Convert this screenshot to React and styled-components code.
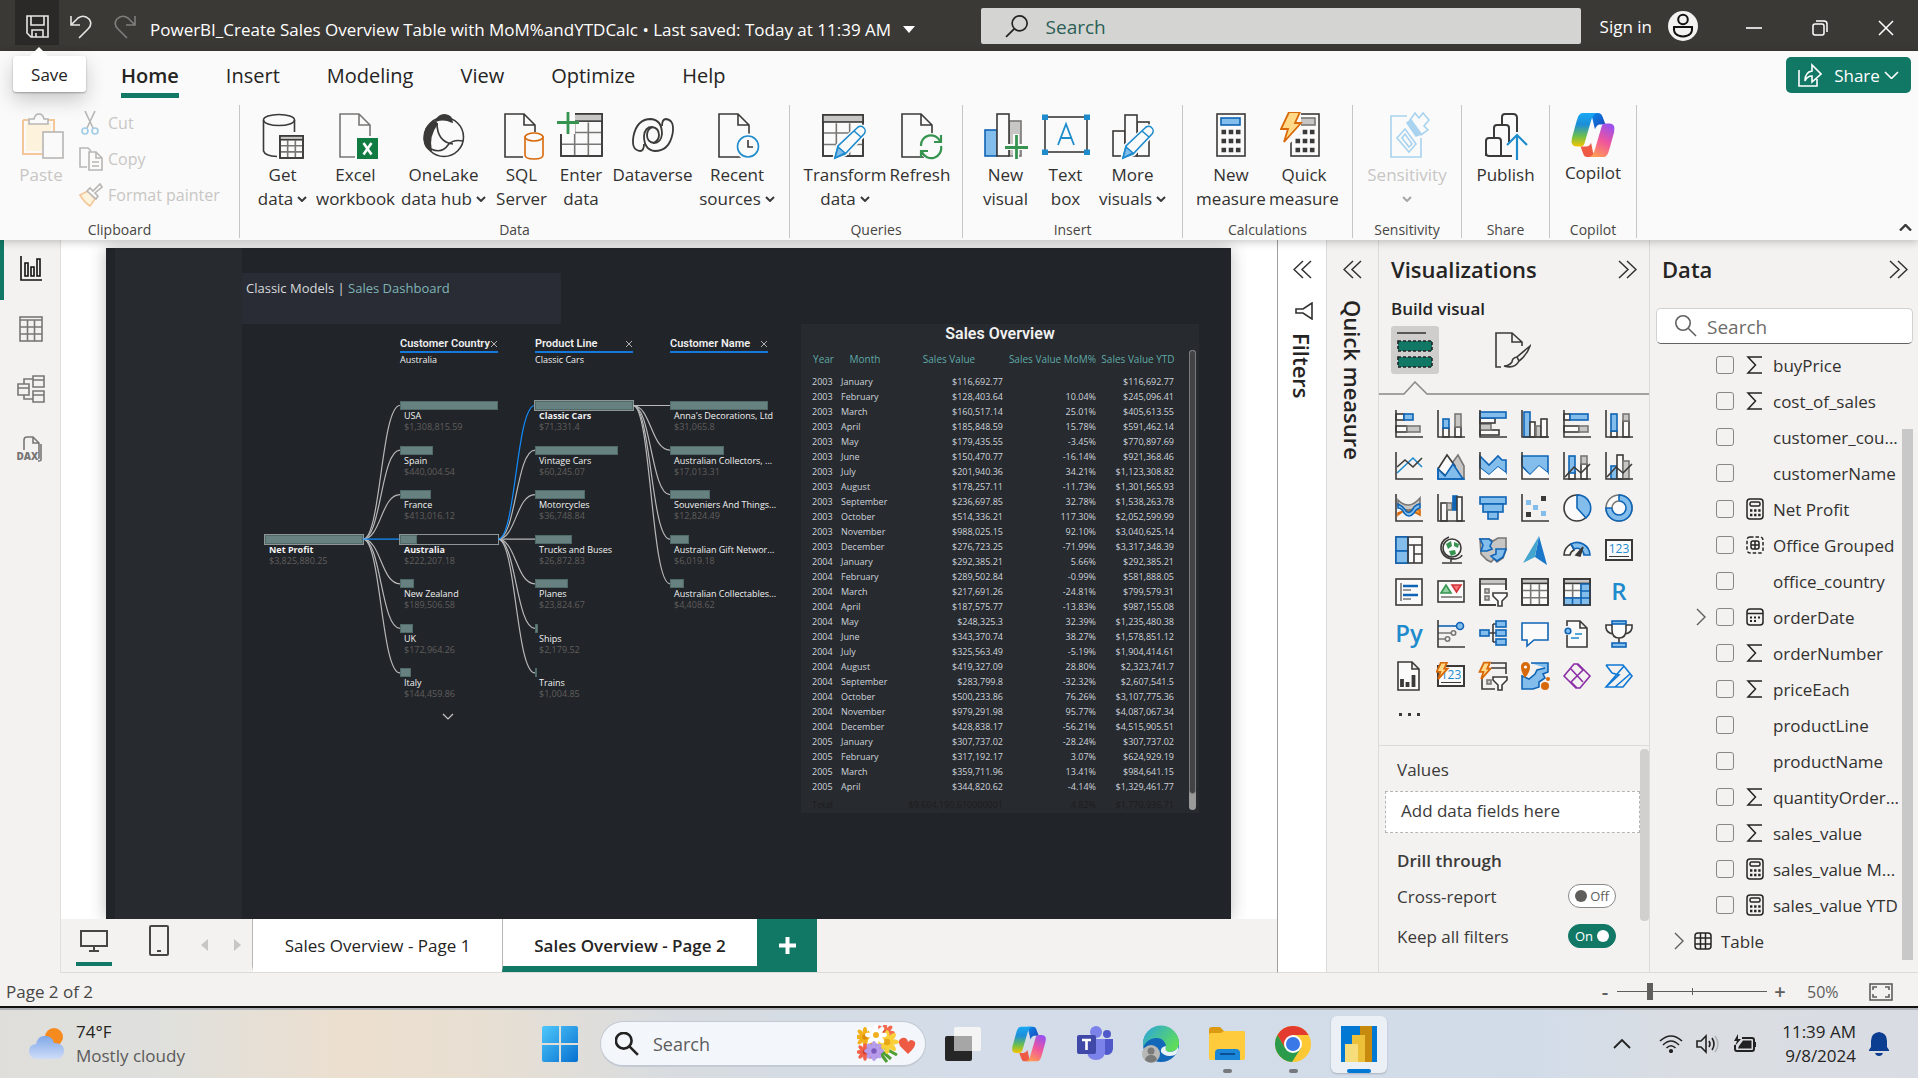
import React from "react";
import styled, { createGlobalStyle, css } from "styled-components";

const SANS = `"Open Sans", "Noto Sans", sans-serif`;
const DIN = `Roboto, "Open Sans", sans-serif`;
const GREEN = "#117865";
const K = "#3b3a39";
const G = "#797775";
const LG = "#c8c6c4";
const B = "#0f64b5";
const LB = "#83bdec";
const W = "#fafafa";
const SKY = "#1e8bcd";

const Global = createGlobalStyle`
  *, *::before, *::after { box-sizing: border-box; }
  body { margin: 0; font-family: ${SANS}; color: #252423; background: #f3f2f1; }
  button { font: inherit; color: inherit; background: none; border: 0; padding: 0; cursor: pointer; }
  input { font: inherit; margin: 0; }
  svg { display: block; flex: none; }
`;

const Shell = styled.div`
  display: flex;
  flex-direction: column;
  min-height: 100vh;
`;

/* ---------- title bar ---------- */
const TitleBar = styled.header`
  display: flex;
  height: 51px;
  background: #3b3936;
  color: #fff;
  padding-left: 15px;
`;
const QuickButton = styled.button`
  width: 44px;
  height: 45px;
  display: flex;
  justify-content: center;
  padding-top: 15px;
  background: ${(p) => (p.$active ? "#2a2927" : "transparent")};
  opacity: ${(p) => (p.$dim ? 0.4 : 1)};
`;
const FileName = styled.button`
  display: flex;
  align-items: center;
  gap: 12px;
  height: 58px;
  margin-left: 3px;
  font-size: 17px;
  white-space: nowrap;
`;
const Spacer = styled.div`
  flex: 1;
`;
const TopSearch = styled.label`
  display: flex;
  align-items: center;
  gap: 18px;
  width: 600px;
  height: 36px;
  margin-top: 8px;
  padding-left: 24px;
  border-radius: 2px;
  background: #d4d4d2;
`;
const TopSearchInput = styled.input`
  flex: 1;
  padding: 2px 0 0;
  border: 0;
  background: none;
  outline: 0;
  font-size: 19px;
  &::placeholder { color: #2b5f57; opacity: 1; }
`;
const SignIn = styled.button`
  display: flex;
  align-items: center;
  gap: 16px;
  height: 52px;
  margin-left: 19px;
  font-size: 17px;
`;
const WindowButtons = styled.div`
  display: flex;
  margin-left: 22px;
`;
const WindowButton = styled.button`
  width: 66px;
  height: 55px;
  display: flex;
  align-items: center;
  justify-content: center;
  padding-left: 2px;
`;

/* ---------- ribbon ---------- */
const Ribbon = styled.section`
  position: relative;
  z-index: 2;
  background: #fafafa;
  box-shadow: 0 2px 8px rgba(0, 0, 0, 0.22);
`;
const RibbonTabs = styled.nav`
  display: flex;
  align-items: center;
  gap: 47px;
  height: 54px;
  padding: 0 7px 0 121px;
`;
const RibbonTab = styled.button`
  height: 47px;
  margin-bottom: 7px;
  padding-top: 6px;
  font-size: 20px;
  font-weight: ${(p) => (p.$active ? 600 : 400)};
  border-bottom: 5px solid ${(p) => (p.$active ? GREEN : "transparent")};
`;
const ShareButton = styled.button`
  display: flex;
  align-items: center;
  justify-content: center;
  gap: 12px;
  width: 125px;
  height: 36px;
  margin-bottom: 6px;
  border-radius: 5px;
  background: ${GREEN};
  color: #fff;
  font-size: 17px;
`;
const Groups = styled.div`
  display: flex;
  height: 135px;
  padding-bottom: 2px;
`;
const Group = styled.div`
  display: flex;
  flex-direction: column;
  align-items: center;
  justify-content: space-between;
  width: ${(p) => p.$width}px;
  border-right: 1px solid #c8c6c4;
`;
const GroupLabel = styled.div`
  font-size: 14px;
  line-height: 16px;
  color: #484644;
`;
const Commands = styled.div`
  display: flex;
  padding-top: 7px;
`;
const Command = styled.button`
  display: flex;
  flex-direction: column;
  align-items: center;
  width: ${(p) => p.$width}px;
  font-size: 17px;
  line-height: 24px;
  color: ${(p) => (p.$off ? "#c8c6c4" : "#323130")};
  white-space: nowrap;
  & > svg { margin-bottom: 3px; }
`;
const LabelLine = styled.span`
  display: flex;
  align-items: center;
  gap: 4px;
  min-height: 24px;
`;
const ClipColumn = styled.div`
  display: flex;
  flex-direction: column;
`;
const ClipButton = styled.button`
  display: flex;
  align-items: center;
  gap: 5px;
  height: 36px;
  color: #c8c6c4;
  font-size: 16px;
  white-space: nowrap;
`;
const Clipboard = styled.div`
  display: flex;
  align-self: stretch;
  padding-left: 6px;
  gap: 3px;
`;
const Collapse = styled.button`
  margin: auto 6px 7px auto;
`;
const SaveTip = styled.div`
  position: absolute;
  left: 13px;
  top: 5px;
  width: 73px;
  height: 36px;
  line-height: 38px;
  text-align: center;
  font-size: 17px;
  background: #fff;
  border-radius: 3px;
  box-shadow: 0 1px 2px rgba(0, 0, 0, 0.3), 0 8px 20px rgba(0, 0, 0, 0.2);
  &::before {
    content: "";
    position: absolute;
    left: 17px;
    top: -9px;
    border: 9px solid transparent;
    border-top: 0;
    border-bottom-color: #fff;
  }
`;

/* ---------- workspace ---------- */
const Workspace = styled.div`
  display: flex;
  flex: 1;
`;
const ViewRail = styled.nav`
  display: flex;
  flex-direction: column;
  width: 61px;
  border-right: 1px solid #e1dfdd;
`;
const ViewButton = styled.button`
  height: 60px;
  display: flex;
  align-items: center;
  justify-content: center;
  border-left: 4px solid ${(p) => (p.$active ? GREEN : "transparent")};
  padding: 0 3px 2px 0;
`;
const Main = styled.main`
  flex: 1;
  min-width: 0;
  display: flex;
  flex-direction: column;
`;
const Canvas = styled.div`
  flex: 1;
  display: flex;
  background: #fff;
  padding: 8px 46px 0 45px;
`;
const Report = styled.div`
  flex: 1;
  display: flex;
  background: #212429;
  box-shadow: 0 0 16px rgba(0, 0, 0, 0.25);
  clip-path: inset(-16px -16px 0 -16px);
  padding-left: 9px;
`;
const ReportRail = styled.div`
  width: 127px;
  background: #272a2e;
`;
const ReportBody = styled.div`
  flex: 1;
`;
const Heading = styled.h1`
  width: 319px;
  height: 51px;
  margin: 25px 0 0;
  padding: 4px 4px;
  background: #292c34;
  color: #d8dadd;
  font-size: 13px;
  line-height: 22px;
  font-weight: 400;
`;
const Accent = styled.span`
  color: #7fb4b6;
`;
const Visuals = styled.div`
  display: flex;
  justify-content: space-between;
  align-items: flex-start;
  padding: 0 32px 0 23px;
`;
const Tree = styled.section`
  padding-top: 13px;
`;
const TreeHeads = styled.div`
  display: flex;
  gap: 37px;
  padding-left: 135px;
  height: 64px;
`;
const TreeHead = styled.div`
  width: 98px;
`;
const TreeTitle = styled.div`
  display: flex;
  align-items: center;
  justify-content: space-between;
  height: 16px;
  border-bottom: 2px solid #1478dc;
  font: 600 11px/14px ${DIN};
  color: #eee;
  white-space: nowrap;
`;
const TreeSub = styled.div`
  font-size: 9px;
  line-height: 14px;
  color: #f0f0f0;
`;
const TreeBody = styled.div`
  display: flex;
  height: 312px;
`;
const TreeColumn = styled.div`
  display: grid;
  grid-template-columns: 98px;
  grid-template-rows: repeat(7, 1fr);
  width: 98px;
`;
const Node = styled.div`
  grid-row-start: ${(p) => p.$row};
  min-height: 0;
`;
const NodeTrack = styled.div`
  height: 9px;
  outline: ${(p) => (p.$picked ? "1px solid #8f9494" : "none")};
`;
const NodeBar = styled.div`
  height: 9px;
  background: #678080;
  border: 1px solid #506a6a;
`;
const NodeName = styled.div`
  padding-left: 4px;
  font-size: 9px;
  line-height: 12px;
  font-weight: ${(p) => (p.$picked ? 700 : 400)};
  color: #f2f2f2;
  white-space: nowrap;
`;
const NodeValue = styled.div`
  padding-left: 4px;
  font-size: 9px;
  line-height: 9px;
  color: #605e5c;
`;
const MoreNodes = styled.button`
  display: block;
  margin-left: 177px;
`;
const Card = styled.section`
  display: flex;
  width: 398px;
  height: 489px;
  padding: 0 3px 3px 8px;
  background: #272a2e;
`;
const CardMain = styled.div`
  width: 380px;
`;
const CardTitle = styled.h2`
  margin: 0;
  padding-left: 2px;
  font: 600 16px/20px ${DIN};
  color: #f0f0f0;
  text-align: center;
`;
const SalesTable = styled.table`
  table-layout: fixed;
  width: 368px;
  border-collapse: collapse;
  font-size: 9px;
  line-height: 15px;
  color: #cdd3dc;
  th, td { padding: 0 3px; white-space: nowrap; text-align: right; }
  th { height: 30px; padding: 0; text-align: center; font-size: 10px; font-weight: 400; color: #5fa9a8; }
  td:nth-child(1), td:nth-child(2) { text-align: left; }
  tfoot td { color: #1b1d20; height: 20px; }
`;
const Col = styled.col`
  width: ${(p) => p.$width}px;
`;
const CardScroll = styled.div`
  width: 7px;
  height: 460px;
  margin-top: 26px;
  border-radius: 4px;
  background: #9a9a9a;
  &::before {
    content: "";
    display: block;
    height: 444px;
    border: 1px solid #7a7a7a;
    border-radius: 4px;
    background: #424345;
  }
`;

/* ---------- page tabs ---------- */
const PageBar = styled.nav`
  display: flex;
  height: 54px;
  border-bottom: 1px solid #dddbd9;
`;
const LayoutButton = styled.button`
  display: flex;
  justify-content: center;
  width: ${(p) => p.$width}px;
  padding-top: 6px;
`;
const Underlined = styled.span`
  display: flex;
  flex-direction: column;
  align-items: center;
  justify-content: space-between;
  width: 36px;
  height: 41px;
  padding-top: 5px;
  border-bottom: 4px solid ${GREEN};
`;
const Arrows = styled.div`
  display: flex;
  align-items: center;
  gap: 26px;
  height: 51px;
  width: 60px;
  padding-left: 9px;
`;
const PageTab = styled.button`
  width: ${(p) => (p.$active ? 255 : 250)}px;
  padding-top: 6px;
  background: #fff;
  border-left: 1px solid #b9b7b5;
  border-bottom: 6px solid ${(p) => (p.$active ? GREEN : "#fff")};
  font-size: 17px;
  font-weight: ${(p) => (p.$active ? 600 : 400)};
  white-space: nowrap;
`;
const AddPage = styled.button`
  width: 60px;
  background: ${GREEN};
  display: flex;
  align-items: center;
  justify-content: center;
`;

/* ---------- side panes ---------- */
const SlimPane = styled.aside`
  display: flex;
  flex-direction: column;
  align-items: center;
  width: ${(p) => p.$width}px;
  padding-top: 20px;
  border-left: 1px solid ${(p) => (p.$white ? "#a19f9d" : "#dddbd9")};
  border-bottom: 1px solid #dddbd9;
  background: ${(p) => (p.$white ? "#fff" : "#f3f2f1")};
`;
const SlimTitle = styled.h2`
  margin: 0;
  writing-mode: vertical-rl;
  font-size: 22px;
  line-height: 28px;
  font-weight: 600;
`;
const SlimIcon = styled.div`
  padding: 23px 0 13px 4px;
`;
const SlimGap = styled.div`
  height: 21px;
`;
const Pane = styled.aside`
  display: flex;
  flex-direction: column;
  width: ${(p) => p.$width}px;
  border-left: 1px solid #dddbd9;
  border-bottom: 1px solid #dddbd9;
`;
const PaneHead = styled.div`
  display: flex;
  align-items: center;
  justify-content: space-between;
  height: 58px;
  padding: 0 ${(p) => p.$right}px 0 12px;
`;
const PaneTitle = styled.h2`
  margin: 0;
  font-size: 22px;
  font-weight: 600;
`;
const PaneSub = styled.h3`
  margin: 0;
  padding-left: 12px;
  font-size: 17px;
  line-height: 22px;
  font-weight: 600;
`;
const ModeRow = styled.div`
  display: flex;
  gap: 50px;
  padding: 6px 12px 7px;
`;
const ModeButton = styled.button`
  display: flex;
  align-items: center;
  justify-content: center;
  width: 48px;
  height: 48px;
  border-radius: 3px;
  background: ${(p) => (p.$active ? "#d0cecc" : "transparent")};
`;
const VisualGrid = styled.div`
  display: grid;
  grid-template-columns: repeat(6, 28px);
  gap: 14px;
  padding: 15px 16px 12px;
`;
const MoreDots = styled.button`
  align-self: flex-start;
  padding: 9px 19px 28px;
`;
const Wells = styled.div`
  flex: 1;
  display: flex;
  justify-content: space-between;
  border-top: 1px solid #dddbd9;
  padding-top: 3px;
`;
const WellList = styled.div`
  width: 255px;
  margin-left: 6px;
  font-size: 17px;
  color: #3b3a39;
`;
const WellLabel = styled.div`
  padding-left: 12px;
  line-height: 42px;
`;
const DropZone = styled.div`
  height: 42px;
  padding-left: 15px;
  line-height: 38px;
  border: 1px dashed #b8b6b4;
  background: #fff;
`;
const WellHeading = styled.h3`
  margin: 0;
  padding: 13px 0 0 12px;
  font-size: 17px;
  line-height: 30px;
  font-weight: 600;
`;
const SwitchRow = styled.label`
  display: flex;
  align-items: center;
  justify-content: space-between;
  height: 40px;
  padding: 0 24px 0 12px;
`;
const Switch = styled.span`
  position: relative;
  display: flex;
  align-items: center;
  justify-content: ${(p) => (p.$on ? "flex-start" : "flex-end")};
  width: 48px;
  height: 24px;
  padding: 0 6px;
  border: 1px solid ${(p) => (p.$on ? GREEN : "#8a8886")};
  border-radius: 12px;
  background: ${(p) => (p.$on ? GREEN : "#fff")};
  color: ${(p) => (p.$on ? "#fff" : "#605e5c")};
  font-size: 13px;
`;
const SwitchInput = styled.input`
  appearance: none;
  position: absolute;
  top: 5px;
  left: 6px;
  width: 12px;
  height: 12px;
  border-radius: 50%;
  background: #605e5c;
  &:checked { left: 28px; background: #fff; }
`;
const WellScroll = styled.div`
  width: 9px;
  height: 172px;
  border-radius: 4px;
  background: #d2d0ce;
`;
const DataSearch = styled.label`
  display: flex;
  align-items: center;
  gap: 10px;
  height: 36px;
  margin: 10px 5px 3px 6px;
  padding-left: 18px;
  border: 1px solid #d1d1d1;
  border-bottom-color: #616161;
  border-radius: 5px;
  background: #fff;
`;
const DataSearchInput = styled.input`
  width: 160px;
  padding: 2px 0 0;
  border: 0;
  outline: 0;
  background: none;
  font-size: 19px;
  &::placeholder { color: #6e6c6a; opacity: 1; }
`;
const FieldArea = styled.div`
  flex: 1;
  display: flex;
`;
const FieldList = styled.ul`
  flex: 1;
  margin: 0;
  padding: 0;
  list-style: none;
`;
const FieldRow = styled.li`
  display: flex;
  align-items: center;
  height: 36px;
  padding-left: ${(p) => (p.$table ? 24 : 46)}px;
  font-size: 17px;
  color: #323130;
`;
const FieldLabel = styled.label`
  display: flex;
  align-items: center;
  white-space: nowrap;
`;
const Check = styled.input`
  appearance: none;
  width: 18px;
  height: 18px;
  border: 1px solid #8a8886;
  border-radius: 3px;
`;
const Slot = styled.span`
  display: flex;
  align-items: center;
  width: ${(p) => p.$width}px;
`;
const FieldIcon = styled.span`
  width: 18px;
  margin: 0 9px 0 12px;
`;
const FieldScroll = styled.div`
  width: 11px;
  height: 531px;
  margin: 82px 5px 0 0;
  background: #c8c8c8;
`;

/* ---------- status bar ---------- */
const StatusBar = styled.footer`
  display: flex;
  align-items: center;
  height: 33px;
  padding: 4px 25px 0 6px;
  font-size: 17px;
  color: #484644;
`;
const ZoomStep = styled.button`
  width: 20px;
  margin: 0 1px;
  font-size: 20px;
  font-weight: 600;
  color: #605e5c;
`;
const ZoomRange = styled.input`
  appearance: none;
  width: 150px;
  height: 17px;
  margin: 0 2px 0 1px;
  background:
    linear-gradient(#605e5c, #605e5c) center / 1px 7px no-repeat,
    linear-gradient(#605e5c, #605e5c) center / 100% 1px no-repeat;
  &::-webkit-slider-thumb {
    appearance: none;
    width: 6px;
    height: 17px;
    background: #605e5c;
  }
`;
const ZoomValue = styled.span`
  width: 62px;
  margin-left: 16px;
  font-size: 16px;
  color: #605e5c;
`;

/* ---------- taskbar ---------- */
const Taskbar = styled.footer`
  display: grid;
  grid-template-columns: 1fr auto 1fr;
  height: 72px;
  padding-top: 2px;
  border-top: 2px solid #111;
  box-shadow: inset 0 2px 0 #adb1b5;
  background: linear-gradient(90deg, #dfdedb 0%, #dfe0dd 8%, #ecdfcf 18%, #e8dfd2 25%, #d8dce0 35%, #d3dce8 50%, #d2dce9 80%, #dadde2 88%, #d9dce2 100%);
`;
const Weather = styled.button`
  display: flex;
  align-items: center;
  gap: 11px;
  padding-left: 28px;
  text-align: left;
  font-size: 17px;
  line-height: 24px;
`;
const Muted = styled.span`
  display: block;
  color: #5a5a5a;
`;
const Apps = styled.div`
  display: flex;
  align-items: center;
  padding-left: 1px;
`;
const AppButton = styled.button`
  position: relative;
  display: flex;
  align-items: center;
  justify-content: center;
  width: 56px;
  height: 57px;
  margin: 0 5px;
  border-radius: 6px;
  ${(p) => p.$active && css`background: #ebf0f6; box-shadow: 0 1px 2px rgba(0, 0, 0, 0.2);`}
  &::after {
    content: "";
    display: ${(p) => (p.$active || p.$running ? "block" : "none")};
    position: absolute;
    bottom: 0;
    width: ${(p) => (p.$active ? 24 : 9)}px;
    height: 4px;
    border-radius: 2px;
    background: ${(p) => (p.$active ? "#0078d4" : "#75797e")};
  }
`;
const TaskSearch = styled.label`
  display: flex;
  align-items: center;
  gap: 14px;
  width: 326px;
  height: 46px;
  margin: 0 4px 0 7px;
  padding: 0 8px 0 14px;
  border: 1px solid #c3cad3;
  border-bottom-width: 2px;
  border-radius: 23px;
  background: #f3f6fa;
`;
const TaskSearchInput = styled.input`
  flex: 1;
  min-width: 0;
  padding: 1px 0 0;
  border: 0;
  outline: 0;
  background: none;
  font-size: 18px;
  &::placeholder { color: #5c5c5c; opacity: 1; }
`;
const Tray = styled.div`
  display: flex;
  align-items: center;
  justify-content: flex-end;
  gap: 13px;
  padding-right: 29px;
`;
const Clock = styled.div`
  width: 86px;
  text-align: right;
  font-size: 17px;
  line-height: 24px;
  white-space: nowrap;
`;

/* ---------- drawings ---------- */
const Svg = ({ w, h, vb, children, ...rest }) => (
  <svg width={w} height={h ?? w} viewBox={vb ?? `0 0 ${w} ${h ?? w}`} fill="none" stroke={K} strokeWidth="1.6" aria-hidden="true" {...rest}>
    {children}
  </svg>
);
const Chevron = ({ w = 10, color = K, up, right, sw = 2 }) => (
  <Svg w={right ? w / 2 + 1 : w} h={right ? w : w / 2 + 1} stroke={color} strokeWidth={sw}>
    <path d={right ? `M1 1L${w / 2} ${w / 2}L1 ${w - 1}` : up ? `M1 ${w / 2}L${w / 2} 1L${w - 1} ${w / 2}` : `M1 1L${w / 2} ${w / 2}L${w - 1} 1`} />
  </Svg>
);
const Double = ({ left }) => (
  <Svg w={19} stroke="#323130" strokeWidth="1.5">
    <path d={left ? "M10 1L1 9.5L10 18M18 1L9 9.5L18 18" : "M1 1L10 9.5L1 18M9 1L18 9.5L9 18"} />
  </Svg>
);
const Lens = ({ size, color, sw = 1.6, flip }) => (
  <Svg w={size} vb="0 0 22 22" stroke={color} strokeWidth={sw}>
    {flip ? <path d="M8.800 13.200L1 21" /> : <path d="M13.200 13.200L21 21" />}
    <circle cx={flip ? 14 : 8} cy="8" r="7.200" />
  </Svg>
);

const Doc = ({ stroke = K, x = 4 }) => (
  <path d={`M${x + 22} 45H${x}V2H${x + 19}L${x + 30} 13V26M${x + 19} 2V13H${x + 30}`} stroke={stroke} />
);
const Pencil = () => (
  <>
    <path d="M14 46L17 34L37 16a4 4 0 0 1 6 6L24 42Z" fill={W} stroke={W} strokeWidth="5" />
    <path d="M14 46L17 34L36 16a4 4 0 0 1 7 6L24 42Z" fill={W} stroke={SKY} />
    <path d="M14 46L17 35L24 41Z" fill={LB} stroke={SKY} />
    <path d="M33 19L40 25" stroke={SKY} />
  </>
);
const Grid = ({ x, y, w, h, s = K, head = LG }) => (
  <>
    <rect x={x} y={y} width={w} height={h} fill={W} stroke={s} />
    <path d={`M${x} ${y + h * 0.44}h${w}M${x} ${y + h * 0.72}h${w}M${x + w / 3} ${y + h * 0.2}V${y + h}M${x + (w * 2) / 3} ${y + h * 0.2}V${y + h}`} stroke={G} />
    <rect x={x} y={y} width={w} height={h} stroke={s} />
    <rect x={x} y={y} width={w} height={h * 0.17} fill={head} stroke={s} />
  </>
);
const Calc = ({ x = 12 }) => (
  <>
    <rect x={x} y="2" width="28" height="42" fill={W} />
    <path d={`M${x + 4.500} 20h19M${x + 4.500} 29h19M${x + 4.500} 38h19`} stroke={K} strokeWidth="4.500" strokeDasharray="4.600 2.600" />
  </>
);
const Bolt = ({ s = 1, x = 0, y = 0 }) => (
  <path transform={`translate(${x} ${y}) scale(${s})`} d="M9 1H20L15 12H21L4 31L8 18H1Z" fill="#ffd987" stroke="#d8690a" strokeWidth={1.8 / s} />
);
const CopilotMark = ({ size }) => (
  <svg width={size} height={size} viewBox="0 0 48 48" aria-hidden="true">
    <defs>
      <linearGradient id="cpA" x1="0" y1="0" x2="0" y2="1">
        <stop offset="0" stopColor="#18a8f5" /><stop offset=".35" stopColor="#1d8ed8" /><stop offset=".7" stopColor="#6fc04a" /><stop offset="1" stopColor="#f5c400" />
      </linearGradient>
      <linearGradient id="cpB" x1=".7" y1="0" x2=".3" y2="1">
        <stop offset="0" stopColor="#9a50ee" /><stop offset=".5" stopColor="#f0559c" /><stop offset="1" stopColor="#ff9a55" />
      </linearGradient>
      <linearGradient id="cpC" x1="0" y1="0" x2="1" y2="1">
        <stop offset="0" stopColor="#0a8be8" /><stop offset="1" stopColor="#1d3fb8" />
      </linearGradient>
    </defs>
    <path d="M22 1H29Q33 1 34 5L37 13H31Q28 13 26 18Z" fill="url(#cpC)" />
    <path d="M17 47H25L22 32Q20 36 17 36H11L14 44Q15 47 17 47Z" fill="#ef5a45" />
    <path d="M13 1H28Q24 2 22 9L15 33Q14 36 10 36H7Q0 36 2 27L7 9Q9 1 13 1Z" fill="url(#cpA)" />
    <path d="M35 47H20Q24 46 26 39L33 15Q34 12 38 12H41Q48 12 46 21L41 39Q39 47 35 47Z" fill="url(#cpB)" />
  </svg>
);

const ribbonIcon = {
  get: (
    <Svg w={48}>
      <ellipse cx="20" cy="8" rx="15.500" ry="5.500" />
      <path d="M4.500 8V39Q6 44 18 44.500M35.500 8V20" />
      <Grid x={21} y={24} w={23} h={22} />
    </Svg>
  ),
  excel: (
    <Svg w={48}>
      <Doc stroke={G} x={8} />
      <path d="M23 24H48V48H23Z" fill={W} stroke="none" />
      <rect x="25" y="26" width="21" height="21" fill="#107c41" stroke="none" />
      <path d="M31.500 31L39.500 42.500M39.500 31L31.500 42.500" stroke="#fff" strokeWidth="2.600" />
    </Svg>
  ),
  lake: (
    <Svg w={48}>
      <path d="M16 9Q19 2 26 3Q32 4 32 10Q24 6 16 9Z" fill={K} />
      <path d="M15 9Q4 14 4 27Q5 37 11 38Q8 24 17 12Z" fill={K} />
      <circle cx="24" cy="25" r="19.500" />
      <path d="M17 11Q17 30 33 32M11 37Q22 42 28 33Q33 27 43 29" />
    </Svg>
  ),
  sql: (
    <Svg w={48}>
      <Doc x={7} />
      <path d="M25 20H48V48H25Z" fill={W} stroke="none" />
      <path d="M27 25V43Q27 47 36 47T45 43V25Z" fill={W} stroke="#d8690a" />
      <ellipse cx="36" cy="25" rx="9" ry="4" fill={W} stroke="#d8690a" />
    </Svg>
  ),
  enter: (
    <Svg w={48}>
      <Grid x={4} y={2} w={41} h={42} />
      <path d="M0 0H18V22H0Z" fill={W} stroke="none" />
      <path d="M11 0V22M0 10.500H22" stroke="#379450" strokeWidth="2.800" />
    </Svg>
  ),
  dataverse: (
    <Svg w={48} strokeWidth="1.8">
      <path d="M11 39Q2 38 4.500 24Q8 7 22 7Q33 8 33 22Q32 31 25 31Q18 30 18 23Q18 17 24 15M11 39Q15 39 15 32" />
      <path d="M37 7Q46 8 43.500 22Q40 39 26 39Q15 38 15 24Q16 15 23 15Q30 16 30 23Q30 29 24 31M37 7Q33 7 33 14" />
    </Svg>
  ),
  recent: (
    <Svg w={48}>
      <Doc x={6} />
      <circle cx="35" cy="34.500" r="13" fill={W} stroke="none" />
      <circle cx="35" cy="34.500" r="10.500" fill={W} stroke={SKY} />
      <path d="M35 28V35H40" />
    </Svg>
  ),
  transform: (
    <Svg w={48}>
      <Grid x={2} y={3} w={40} h={41} />
      <Pencil />
    </Svg>
  ),
  refresh: (
    <Svg w={48}>
      <Doc x={6} />
      <circle cx="35" cy="34" r="13" fill={W} stroke="none" />
      <path d="M25 34A10 10 0 0 1 44 29M45 34A10 10 0 0 1 26 40M45 23V30H38M25 46V39H32" stroke="#379450" strokeWidth="2.200" />
    </Svg>
  ),
  visual: (
    <Svg w={48}>
      <rect x="3" y="18" width="12" height="26" fill={LB} stroke={B} />
      <rect x="27" y="9" width="12" height="35" fill={LG} stroke={G} />
      <rect x="15" y="2" width="12" height="42" fill={W} />
      <path d="M34 22V48M22 35H48" stroke={W} strokeWidth="6" />
      <path d="M34.500 23V47M23 35.500H46" stroke="#379450" strokeWidth="2.800" />
    </Svg>
  ),
  text: (
    <Svg w={48}>
      <rect x="3" y="5" width="42" height="35" />
      <path d="M0 2.500H6V8H0ZM42 2.500H48V8H42ZM0 37.500H6V43H0ZM42 37.500H48V43H42Z" fill={SKY} stroke="none" />
      <path d="M16 33L24 12L32 33M19 26H29" stroke={SKY} strokeWidth="1.800" />
    </Svg>
  ),
  more: (
    <Svg w={48}>
      <rect x="4" y="19" width="12" height="25" />
      <rect x="28" y="10" width="12" height="34" />
      <rect x="16" y="3" width="12" height="41" fill={W} />
      <Pencil />
    </Svg>
  ),
  measure: (
    <Svg w={48}>
      <Calc x={10} />
      <rect x="14" y="6" width="19" height="7" fill={LB} stroke={B} />
    </Svg>
  ),
  quick: (
    <Svg w={48}>
      <Calc x={11} />
      <rect x="17" y="6" width="18" height="7" fill={LG} stroke={G} />
      <path d="M1 0H21V21L7 34H1Z" fill={W} stroke="none" />
      <Bolt x={0} y={-1} />
    </Svg>
  ),
  sensitivity: (
    <Svg w={48} stroke="#a9d3ee">
      <path d="M24 4H8V45H38V26" />
      <path d="M14 26L22 17L33 32L26 40ZM19 26L22 22L29 32L26 35Z" />
      <path d="M24 11L28 8L38 22L33 24Z" fill="#a9d3ee" />
      <path d="M27 8L32 1L36 6L40 1L46 8L41 14L45 18L38 23Z" />
    </Svg>
  ),
  publish: (
    <Svg w={48}>
      <path d="M4 44V29Q4 26 7 26H16Q19 26 19 29V44H7Q4 44 4 41M12 26V16Q12 13 15 13H24Q27 13 27 16V30M19 44H30M20 13V5Q20 2 23 2H31Q35 2 35 6V20" strokeWidth="2" />
      <path d="M35 48V24M25 33L35 23L45 33" stroke={SKY} strokeWidth="2.200" />
    </Svg>
  ),
  copilot: <CopilotMark size={46} />,
};

const Axis = ({ children }) => (
  <>
    {children}
    <path d="M1 0V27H28" stroke={K} />
  </>
);
const R = ({ x, y, w, h, t = "w" }) => {
  const tone = { w: [W, K], b: [LB, B], g: [LG, G] }[t];
  return <rect x={x} y={y} width={w} height={h} fill={tone[0]} stroke={tone[1]} />;
};
const Funnel = () => <path d="M14 15H28V18L23 23V28H19V23L14 18Z" fill={W} />;

const visuals = [
  ["Stacked bar chart", <Axis><R x={1} y={4} w={8} h={6} /><R x={9} y={4} w={9} h={6} t="b" /><R x={1} y={16} w={11} h={6} /><R x={12} y={16} w={13} h={6} t="g" /></Axis>],
  ["Stacked column chart", <Axis><R x={6} y={18} w={6} h={9} /><R x={6} y={9} w={6} h={9} t="b" /><R x={18} y={17} w={6} h={10} /><R x={18} y={4} w={6} h={13} t="g" /></Axis>],
  ["Clustered bar chart", <Axis><R x={1} y={20} w={19} h={5} /><R x={1} y={14} w={11} h={6} t="g" /><R x={1} y={8} w={15} h={5} /><R x={1} y={2} w={26} h={6} t="b" /></Axis>],
  ["Clustered column chart", <Axis><R x={3} y={2} w={6} h={25} t="b" /><R x={9} y={12} w={5} h={15} /><R x={15} y={16} w={5} h={11} t="g" /><R x={20} y={9} w={6} h={18} /></Axis>],
  ["100% stacked bar chart", <Axis><R x={1} y={4} w={6} h={6} /><R x={7} y={4} w={18} h={6} t="b" /><R x={1} y={16} w={15} h={6} /><R x={16} y={16} w={9} h={6} t="g" /></Axis>],
  ["100% stacked column chart", <Axis><R x={6} y={21} w={6} h={6} /><R x={6} y={4} w={6} h={17} t="b" /><R x={18} y={11} w={6} h={16} /><R x={18} y={4} w={6} h={7} t="g" /></Axis>],
  ["Line chart", <Axis><path d="M2 21L18 6L27 15" stroke={SKY} /><path d="M2 15L10 8L18 15L27 6" /></Axis>],
  ["Area chart", <><path d="M13 14L21 3L27 14V26H18Z" fill={LG} stroke={G} /><path d="M1 17L10 3L18 14L9 24Z" fill={W} /><path d="M1 17L8 24L16 12L26 27H1Z" fill={LB} stroke={B} /><path d="M1 16V27H28" stroke={B} /></>],
  ["Stacked area chart", <Axis><path d="M1 4L10 13L19 4L23 8H27V21L19 15L10 23L1 16Z" fill={LB} stroke={B} /><path d="M1 16L10 23L19 15L27 21V27H1Z" fill={W} stroke="none" /></Axis>],
  ["100% stacked area chart", <Axis><path d="M1 4H27V21L18 14L9 23L1 14Z" fill={LB} stroke={B} /><path d="M1 16L9 23L18 14L27 21V27H1Z" fill={W} stroke="none" /></Axis>],
  ["Line and stacked column chart", <Axis><R x={6} y={20} w={6} h={7} /><R x={6} y={4} w={6} h={17} t="b" /><R x={18} y={12} w={6} h={15} /><R x={18} y={4} w={6} h={8} t="g" /><path d="M2 25L11 15L18 21L27 12" /></Axis>],
  ["Line and clustered column chart", <Axis><R x={6} y={14} w={6} h={13} t="b" /><R x={12} y={3} w={6} h={24} /><R x={18} y={9} w={6} h={18} t="g" /><path d="M2 25L11 15L18 21L27 12" /></Axis>],
  ["Ribbon chart", <Axis><path d="M3 19Q14 14 25 21V16Q14 11 3 21Z" fill="#f59b3c" stroke="#d8690a" /><path d="M3 6Q14 17 25 4V9Q14 22 3 11Z" fill={LG} stroke={G} /><path d="M3 10Q8 12 11 17Q15 21 19 13Q22 10 25 10V14Q22 14 19 19Q14 25 9 19Q7 14 3 14Z" fill={LB} stroke={B} /></Axis>],
  ["Waterfall chart", <Axis><R x={4} y={9} w={6} h={18} /><R x={10} y={9} w={5} h={7} t="g" /><rect x="16" y="2" width="4" height="14" fill={B} stroke={B} /><R x={20} y={3} w={5} h={24} /></Axis>],
  ["Funnel", <><R x={1} y={3} w={26} h={7} t="b" /><R x={4} y={10} w={20} h={8} t="b" /><R x={9} y={18} w={10} h={7} t="b" /></>],
  ["Scatter chart", <Axis><path d="M5 6H10V11H5ZM12 11H17V16H12ZM20 17H25V22H20Z" fill={LB} stroke="none" /><path d="M20 2H25V7H20ZM5 18H10V23H5Z" fill={K} stroke="none" /></Axis>],
  ["Pie chart", <><circle cx="14" cy="14" r="13" fill={W} /><path d="M14 1A13 13 0 0 1 23 24L14 14Z" fill={LB} stroke={B} /></>],
  ["Donut chart", <><circle cx="14" cy="14" r="13" fill={W} stroke={G} /><path d="M14 1A13 13 0 1 1 1 14H7A7 7 0 1 0 14 7Z" fill={LB} stroke={B} /><path d="M7 14A7 7 0 0 1 14 7" stroke={G} /></>],
  ["Treemap", <><R x={1} y={1} w={26} h={26} /><R x={1} y={1} w={12} h={14} t="b" /><R x={1} y={15} w={12} h={12} t="b" /><path d="M13 9H27M19 9V27M19 18H27M13 1V27" /></>],
  ["Map", <><circle cx="15" cy="12" r="9" fill={W} /><path d="M9 8L14 5L15 10L11 13ZM17 6L22 8L21 12L17 10ZM12 15L18 14L19 18L14 20Z" fill="#379450" stroke="none" /><path d="M12 1Q3 5 4 13Q6 23 18 23Q24 22 25 19M14 23V26M5 27H25" /></>],
  ["Filled map", <><path d="M1 3H10L14 5L19 2H27V14L24 22L18 26L15 23L12 26L8 24L2 18Z" fill={LG} stroke={G} /><path d="M1 3H10L13 6L11 10L13 13L8 15H2L4 9Z" fill={LB} stroke={B} /><path d="M17 13H27L24 21L18 25L14 22L12 20L17 18Z" fill={LB} stroke={B} /></>],
  ["Azure map", <><path d="M18 0L26 29L14 21Z" fill="#1976c9" stroke="none" /><path d="M18 0L14 21L2 27Z" fill="#44a5cf" stroke="none" /></>],
  ["Gauge", <><path d="M1 19A13 13 0 0 1 8 8L11 14A7 7 0 0 0 7 19Z" fill={W} /><path d="M8 8A13 13 0 0 1 27 19H21A7 7 0 0 0 11 13Z" fill={LB} stroke={B} /><path d="M13 19L20 11L17 20Z" fill={K} /></>],
  ["Card", "card"],
  ["Multi-row card", <><R x={1} y={1} w={26} h={26} /><path d="M6 5V23" stroke={G} /><path d="M8 8H23M8 17H23" stroke={B} strokeWidth="2.600" /><path d="M8 12H16M8 21H16" stroke={G} /></>],
  ["KPI", <><R x={1} y={3} w={26} h={21} /><path d="M4 15L9 7L14 15Z" fill="#8fd3a0" stroke="#379450" /><path d="M15 7H24L19.500 14Z" fill="#f7757a" stroke="#d13438" /><path d="M4 19H25" stroke={G} /></>],
  ["Slicer", <><R x={1} y={1} w={26} h={26} /><R x={1} y={1} w={26} h={5} t="g" /><rect x="1" y="1" width="26" height="26" /><R x={6} y={11} w={4} h={4} t="g" /><R x={6} y={18} w={4} h={4} t="g" /><path d="M12 12H30V29H17V22L12 18Z" fill="#f3f2f1" stroke="none" /><Funnel /></>],
  ["Table", <Grid x={1} y={1} w={26} h={26} />],
  ["Matrix", <><Grid x={1} y={1} w={26} h={26} /><path d="M18 6H27V27H1V20H18Z" fill={LB} stroke={B} /><path d="M9.500 20V27M18 20V27M18 13H27M18 20H27" stroke={B} /><rect x="1" y="1" width="26" height="26" /></>],
  ["R script visual", "R"],
  ["Python visual", "Py"],
  ["Key influencers", <Axis><path d="M1 6H20" stroke={B} /><circle cx="23" cy="6" r="3.500" fill={LB} stroke={B} /><path d="M1 13H14M1 19H8" stroke={G} /><circle cx="16.500" cy="13" r="2.200" fill={W} stroke={G} /><circle cx="10.500" cy="19" r="2.200" fill={W} stroke={G} /></Axis>],
  ["Decomposition tree", <><path d="M10 13H17M14 4V22M14 4H17M14 22H17" /><R x={1} y={10} w={9} h={6} t="b" /><R x={17} y={1} w={10} h={6} t="b" /><R x={17} y={10} w={10} h={6} t="b" /><R x={17} y={19} w={10} h={6} t="b" /></>],
  ["Q&A", <path d="M1 3H27V20H13L6 26V20H1Z" fill={W} stroke={B} />],
  ["Narrative", <><path d="M4 6V1H17L24 8V27H4V15M17 1V8H24" fill={W} /><path d="M12 14H19M8 18H16" stroke={SKY} /><circle cx="5" cy="11" r="2.800" fill={LB} stroke={B} /></>],
  ["Goals", <><path d="M7 4V10Q7 18 14 18T21 10V4M7 5H1V8Q2 13 8 14M21 5H27V8Q26 13 20 14M14 18V23" fill={W} /><R x={7} y={1} w={14} h={3} t="b" /><R x={7} y={23} w={14} h={4} t="b" /></>],
  ["Paginated report", <><path d="M3 0H17L24 7V28H3ZM17 0V7H24" fill={W} /><path d="M7 25V17M12.500 25V20M18.500 25V13" strokeWidth="3.800" /></>],
  ["New card", "cardBolt"],
  ["New slicer", <><path d="M12 1H27V12M3 14V27H16M12 6H27" /><R x={8} y={18} w={4} h={4} t="g" /><Funnel /><Bolt s={0.55} /></>],
  ["ArcGIS maps", <><path d="M10 1H27V10L22 12L24 16L18 20V25L12 27H1V14L8 17L14 12L16 8L24 6" fill={LB} stroke={B} /><path d="M4 0A4.500 4.500 0 0 1 9 5Q9 10 4 16Q0 10 0 5A4.500 4.500 0 0 1 4 0Z" fill="#d8690a" stroke="none" /><circle cx="4.500" cy="5" r="1.600" fill={W} stroke="none" /><circle cx="24" cy="24" r="4" fill="#d8690a" stroke="none" /><circle cx="27" cy="17" r="2" fill="#d8690a" stroke="none" /></>],
  ["Power Apps", <path d="M1 14L11 2H15L27 14L17 26H13ZM8 7L20 20M20 8L8 20M14 2L20 8M8 20L14 26" stroke="#8a2da5" />],
  ["Power Automate", <path d="M1 3H18L27 14L18 25H1L19 4M1 3L7 11M10 25L25 12M1 25L14 13L7 11" stroke="#0f78d4" />],
];

const IconText = styled.span`
  font-size: 24px;
  line-height: 28px;
  padding-bottom: 2px;
  font-weight: 600;
  color: ${SKY};
`;
const VisualButton = styled.button`
  position: relative;
  display: flex;
  align-items: center;
  justify-content: center;
  width: 28px;
  height: 28px;
`;
const CardFace = styled.span`
  width: 28px;
  height: 22px;
  border: 2px solid ${K};
  font-size: 12px;
  line-height: 15px;
  text-align: center;
  color: ${SKY};
  background: linear-gradient(${K}, ${K}) center 15px / 20px 1px no-repeat ${W};
`;
const BoltOver = styled.span`
  position: absolute;
  left: -1px;
  top: 0;
`;

const VisualIcon = ({ kind }) => {
  if (kind === "R" || kind === "Py") return <IconText>{kind}</IconText>;
  if (kind === "card") return <CardFace>123</CardFace>;
  if (kind === "cardBolt")
    return (
      <>
        <CardFace>123</CardFace>
        <BoltOver><Svg w={14} h={20}><Bolt s={0.55} /></Svg></BoltOver>
      </>
    );
  return <Svg w={28} overflow="visible">{kind}</Svg>;
};

/* ---------- report data ---------- */
const countries = [["USA", 1308815.59], ["Spain", 440004.54], ["France", 413016.12], ["Australia", 222207.18], ["New Zealand", 189506.58], ["UK", 172964.26], ["Italy", 144459.86]];
const products = [["Classic Cars", 71331.4], ["Vintage Cars", 60245.07], ["Motorcycles", 36748.84], ["Trucks and Buses", 26872.83], ["Planes", 23824.67], ["Ships", 2179.52], ["Trains", 1004.85]];
const customers = [["Anna's Decorations, Ltd", 31065.8], ["Australian Collectors, ...", 17013.31], ["Souveniers And Things...", 12824.49], ["Australian Gift Networ...", 6019.18], ["Australian Collectables...", 4408.62]];
const money = (n) => "$" + n.toLocaleString("en-US", { maximumFractionDigits: 2 });

const sales = `2003 January 116,692.77 - 116,692.77
2003 February 128,403.64 10.04% 245,096.41
2003 March 160,517.14 25.01% 405,613.55
2003 April 185,848.59 15.78% 591,462.14
2003 May 179,435.55 -3.45% 770,897.69
2003 June 150,470.77 -16.14% 921,368.46
2003 July 201,940.36 34.21% 1,123,308.82
2003 August 178,257.11 -11.73% 1,301,565.93
2003 September 236,697.85 32.78% 1,538,263.78
2003 October 514,336.21 117.30% 2,052,599.99
2003 November 988,025.15 92.10% 3,040,625.14
2003 December 276,723.25 -71.99% 3,317,348.39
2004 January 292,385.21 5.66% 292,385.21
2004 February 289,502.84 -0.99% 581,888.05
2004 March 217,691.26 -24.81% 799,579.31
2004 April 187,575.77 -13.83% 987,155.08
2004 May 248,325.3 32.39% 1,235,480.38
2004 June 343,370.74 38.27% 1,578,851.12
2004 July 325,563.49 -5.19% 1,904,414.61
2004 August 419,327.09 28.80% 2,323,741.7
2004 September 283,799.8 -32.32% 2,607,541.5
2004 October 500,233.86 76.26% 3,107,775.36
2004 November 979,291.98 95.77% 4,087,067.34
2004 December 428,838.17 -56.21% 4,515,905.51
2005 January 307,737.02 -28.24% 307,737.02
2005 February 317,192.17 3.07% 624,929.19
2005 March 359,711.96 13.41% 984,641.15
2005 April 344,820.62 -4.14% 1,329,461.77`.split("\n").map((l) => l.split(" "));

const TreeNode = ({ name, value, max, row, picked }) => (
  <Node $row={row}>
    <NodeTrack $picked={picked}>
      <NodeBar style={{ width: `${Math.max(1, (value / max) * 100)}%` }} />
    </NodeTrack>
    <NodeName $picked={picked}>{name}</NodeName>
    <NodeValue>{money(value)}</NodeValue>
  </Node>
);
const NodeColumn = ({ items, picked }) => (
  <TreeColumn>
    {items.map(([name, value], i) => (
      <TreeNode key={name} name={name} value={value} max={items[0][1]} row={i + 1} picked={i === picked} />
    ))}
  </TreeColumn>
);
const rowY = (i) => 4.5 + (312 / 7) * i;
const Links = ({ from, count, picked }) => {
  const order = [...Array(count).keys()].sort((a, b) => (a === picked) - (b === picked));
  return (
    <Svg w={37} h={312} strokeWidth="1.2">
      {order.map((i) => (
        <path key={i} d={`M0 ${rowY(from)}C18 ${rowY(from)} 18 ${rowY(i)} 37 ${rowY(i)}`} stroke={i === picked ? "#118dff" : "#b8b8b8"} />
      ))}
    </Svg>
  );
};
const HeadCell = ({ title, sub }) => (
  <TreeHead>
    <TreeTitle>
      {title}
      <button aria-label={`Remove ${title}`}><Svg w={8} stroke="#b0b0b0" strokeWidth="1"><path d="M1 1L7 7M7 1L1 7" /></Svg></button>
    </TreeTitle>
    <TreeSub>{sub}</TreeSub>
  </TreeHead>
);

/* ---------- field list ---------- */
const fieldIcon = {
  sum: <Svg w={18} stroke="#252423" strokeWidth="1.500"><path d="M16 1H2L9.500 9L2 17H16" /></Svg>,
  calc: (
    <Svg w={18} h={22} stroke="#252423" strokeWidth="1.500">
      <rect x="1" y="1" width="16" height="20" rx="3" /><rect x="4" y="4" width="10" height="4" rx="1.500" />
      <path d="M4 12.500H15M4 17H15" strokeWidth="2.400" strokeDasharray="2.400 1.700" />
    </Svg>
  ),
  group: (
    <Svg w={18} stroke="#252423" strokeWidth="1.500">
      <rect x="1" y="1" width="16" height="16" rx="3" strokeDasharray="3.500 2" /><rect x="5" y="5" width="8" height="8" rx="2" /><path d="M9 5V13M5 9H13" />
    </Svg>
  ),
  date: (
    <Svg w={18} stroke="#252423" strokeWidth="1.500">
      <rect x="1" y="1" width="16" height="16" rx="3" /><path d="M1 5.500H17" /><path d="M4 9.500H15M4 13H11" strokeWidth="2" strokeDasharray="2 2" />
    </Svg>
  ),
  table: (
    <Svg w={18} stroke="#252423" strokeWidth="1.500">
      <rect x="1" y="1" width="16" height="16" rx="3" /><path d="M6.500 1V17M11.500 1V17M1 6H17M1 12H17" />
    </Svg>
  ),
};
const fields = [
  ["buyPrice", "sum"], ["cost_of_sales", "sum"], ["customer_cou..."], ["customerName"], ["Net Profit", "calc"], ["Office Grouped", "group"],
  ["office_country"], ["orderDate", "date", true], ["orderNumber", "sum"], ["priceEach", "sum"], ["productLine"], ["productName"],
  ["quantityOrder...", "sum"], ["sales_value", "sum"], ["sales_value M...", "calc"], ["sales_value YTD", "calc"],
];

/* ---------- ribbon data ---------- */
const groups = [
  ["Data", 550, [["get", 68, "Get", "data", 1], ["excel", 78, "Excel", "workbook"], ["lake", 98, "OneLake", "data hub", 1], ["sql", 58, "SQL", "Server"], ["enter", 61, "Enter", "data"], ["dataverse", 82, "Dataverse"], ["recent", 87, "Recent", "sources", 1]]],
  ["Queries", 173, [["transform", 88, "Transform", "data", 1], ["refresh", 62, "Refresh"]]],
  ["Insert", 220, [["visual", 62, "New", "visual"], ["text", 58, "Text", "box"], ["more", 76, "More", "visuals", 1]]],
  ["Calculations", 170, [["measure", 73, "New", "measure"], ["quick", 73, "Quick", "measure"]]],
  ["Sensitivity", 109, [["sensitivity", 90, "Sensitivity", "", 1, 1]]],
  ["Share", 88, [["publish", 70, "Publish"]]],
  ["Copilot", 87, [["copilot", 70, "Copilot"]]],
];

const viewIcons = [
  ["Report view", <Svg w={22} h={26} stroke="#111"><path d="M1 0V24H22M5 20V7H8V20ZM11 20V11H14V20ZM17 20V3H20V20Z" /></Svg>],
  ["Table view", <Svg w={24} h={27} stroke={G}><rect x="1" y="1" width="22" height="24" /><path d="M1 4H23M1 11H23M1 18H23M8.500 4V25M15.500 4V25" /></Svg>],
  ["Model view", <Svg w={28} h={28} stroke={G}><path d="M1 9H12V20H1ZM1 13H12M16 1H27V12H16ZM16 5H27M16 16H27V27H16ZM16 20H27M7 9V4H16M7 20V24H16" /></Svg>],
  ["DAX query view", "dax"],
];
const DaxMark = styled.span`
  position: relative;
  width: 28px;
  height: 26px;
  font-size: 10px;
  font-weight: 700;
  line-height: 12px;
  text-align: left;
  color: ${G};
  & > svg { position: absolute; left: 6px; top: 0; }
  & > b { position: absolute; left: 0; bottom: 0; background: #f3f2f1; }
`;

const Flower = ({ x, y, r, c, m }) => (
  <g transform={`translate(${x} ${y})`}>
    {[0, 45, 90, 135, 180, 225, 270, 315].map((a) => <ellipse key={a} cx="0" cy={-r * 0.6} rx={r * 0.24} ry={r * 0.5} fill={c} transform={`rotate(${a})`} />)}
    <circle r={r * 0.3} fill={m} />
  </g>
);
const appIcons = {
  windows: (
    <svg width="36" height="36" viewBox="0 0 36 36" aria-hidden="true">
      <defs><linearGradient id="win" x1="0" y1="0" x2="1" y2="1"><stop offset="0" stopColor="#4fc8fb" /><stop offset="1" stopColor="#0670d0" /></linearGradient></defs>
      <path d="M0 2Q0 0 2 0H17V17H0ZM19 0H34Q36 0 36 2V17H19ZM0 19H17V36H2Q0 36 0 34ZM19 19H36V34Q36 36 34 36H19Z" fill="url(#win)" />
    </svg>
  ),
  tasks: (
    <svg width="36" height="36" viewBox="0 0 36 36" aria-hidden="true">
      <rect x="0" y="10" width="27" height="25" rx="2" fill="#262626" /><rect x="9" y="1" width="27" height="24" rx="2" fill="#f4f4f4" /><rect x="9" y="10" width="18" height="15" fill="#a6a6a6" />
    </svg>
  ),
  copilot: <CopilotMark size={36} />,
  teams: (
    <svg width="36" height="36" viewBox="0 0 36 36" aria-hidden="true">
      <circle cx="30" cy="8" r="4" fill="#5059c9" /><path d="M25 13H36V23Q35 29 29 29L25 27Z" fill="#5059c9" />
      <circle cx="19" cy="6" r="6" fill="#7b83eb" /><path d="M10 13H28V26Q27 34 19 34T10 26Z" fill="#7b83eb" />
      <rect x="0" y="9" width="19" height="19" rx="2" fill="#4048a8" /><path d="M5 14H14M9.500 14V24" stroke="#fff" strokeWidth="2.600" />
    </svg>
  ),
  edge: (
    <svg width="38" height="38" viewBox="0 0 38 38" aria-hidden="true">
      <defs><linearGradient id="edg" x1="0" y1="0" x2="1" y2=".6"><stop offset="0" stopColor="#2aa4e0" /><stop offset="1" stopColor="#5fdc5a" /></linearGradient></defs>
      <circle cx="19" cy="19" r="18" fill="#1267b8" /><path d="M1 18A18 18 0 0 1 37 19Q36 27 27 27Q21 26 24 21Q22 12 13 13Q5 14 1 22Z" fill="url(#edg)" />
      <path d="M24 21Q18 22 19 27Q24 33 33 30Q37 26 36 22Q34 27 27 27Q22 26 24 21Z" fill="#e8f2f8" />
      <circle cx="9" cy="29" r="9" fill="#b8b8b6" /><circle cx="9" cy="26" r="3.500" fill="#7a7a78" /><path d="M3 35Q4 30 9 30T15 35Q9 40 3 35Z" fill="#7a7a78" />
    </svg>
  ),
  files: (
    <svg width="38" height="34" viewBox="0 0 38 34" aria-hidden="true">
      <path d="M1 3Q1 0 4 0H12L16 4H35Q37 4 37 7V14H1Z" fill="#dc9a10" /><path d="M1 8Q1 6 3 6H13L16 4H35Q37 4 37 7V31Q37 33 35 33H3Q1 33 1 31Z" fill="#fdcb3c" />
      <path d="M7 33V26Q7 22 11 22H28Q32 22 32 26V33Z" fill="#1a86d8" /><path d="M12 27H27" stroke="#0b4f96" strokeWidth="2" />
    </svg>
  ),
  chrome: (
    <svg width="36" height="36" viewBox="0 0 36 36" aria-hidden="true">
      <circle cx="18" cy="18" r="18" fill="#fcc934" /><path d="M2.400 9A18 18 0 0 1 33.600 9H18L10 22Z" fill="#e33b2e" /><path d="M2.400 9A18 18 0 0 0 17 36L26 22H10Z" fill="#2a9a4b" />
      <circle cx="18" cy="18" r="9" fill="#fff" /><circle cx="18" cy="18" r="7" fill="#3b78e7" />
    </svg>
  ),
  power: (
    <svg width="36" height="36" viewBox="0 0 36 36" aria-hidden="true">
      <rect width="36" height="36" fill="#0078d4" /><rect x="19" y="0" width="12" height="36" fill="#c58a0e" /><rect x="11" y="9" width="13" height="27" fill="#edc03a" /><rect x="4" y="18" width="13" height="18" fill="#f6dc7a" />
    </svg>
  ),
};

export default function App() {
  return (
    <Shell>
      <Global />
      <TitleBar>
        <QuickButton $active aria-label="Save file">
          <Svg w={23} stroke="#e8e6e4"><path d="M1 1H22V22H5L1 18ZM5 1V10H18V1M6 22V15H17V22M10 22V18" /></Svg>
        </QuickButton>
        <QuickButton aria-label="Undo">
          <Svg w={22} h={24} stroke="#e8e6e4"><path d="M1 1V10H10M1 10L8 3Q14 -1 19 4Q23 9 18 14L9 23" /></Svg>
        </QuickButton>
        <QuickButton $dim aria-label="Redo">
          <Svg w={22} h={24} stroke="#e8e6e4"><path d="M21 1V10H12M21 10L14 3Q8 -1 3 4Q-1 9 4 14L13 23" /></Svg>
        </QuickButton>
        <FileName>
          PowerBI_Create Sales Overview Table with MoM%andYTDCalc • Last saved: Today at 11:39 AM
          <Svg w={12} h={7} stroke="none"><path d="M0 0H12L6 7Z" fill="#fff" /></Svg>
        </FileName>
        <Spacer />
        <TopSearch>
          <Lens size={23} color="#222" flip />
          <TopSearchInput type="search" placeholder="Search" aria-label="Search commands" />
        </TopSearch>
        <SignIn>
          Sign in
          <svg width="30" height="30" viewBox="0 0 30 30" fill="none" aria-hidden="true">
            <circle cx="15" cy="15" r="15" fill="#f3f2f1" /><circle cx="15" cy="8.500" r="4.800" stroke="#111" strokeWidth="2" /><path d="M6 16H24Q25 25 15 25.500Q5 25 6 16Z" stroke="#111" strokeWidth="2" />
          </svg>
        </SignIn>
        <WindowButtons>
          <WindowButton aria-label="Minimize"><Svg w={16} stroke="#fff"><path d="M0 8H16" /></Svg></WindowButton>
          <WindowButton aria-label="Restore"><Svg w={16} stroke="#fff" strokeWidth="1.500"><rect x="1" y="4" width="11" height="11" rx="2" /><path d="M4 1H12Q15 1 15 4V12" /></Svg></WindowButton>
          <WindowButton aria-label="Close"><Svg w={16} stroke="#fff" strokeWidth="1.500"><path d="M1 1L15 15M15 1L1 15" /></Svg></WindowButton>
        </WindowButtons>
      </TitleBar>

      <Ribbon>
        <SaveTip role="tooltip">Save</SaveTip>
        <RibbonTabs>
          {["Home", "Insert", "Modeling", "View", "Optimize", "Help"].map((t, i) => (
            <RibbonTab key={t} $active={i === 0}>{t}</RibbonTab>
          ))}
          <Spacer />
          <ShareButton>
            <Svg w={24} h={26} stroke="#fff"><path d="M1 8V24H19V17M7 19Q7 10 14 9V3L23 12L14 20V14Q9 14 7 19Z" /></Svg>
            <LabelLine>Share <Chevron w={15} color="#fff" sw={1.6} /></LabelLine>
          </ShareButton>
        </RibbonTabs>
        <Groups>
          <Group $width={240}>
            <Clipboard>
              <Commands>
                <Command $width={70} $off>
                  <Svg w={48} vb="-3 0 48 48" stroke="#b8b6b4">
                    <path d="M3 8H34V22M22 42H3V8" stroke="#f4c798" strokeWidth="2" /><path d="M6 11H31V22H22V39H6Z" fill="#fdf3dc" stroke="none" />
                    <path d="M9 12V7H14Q15 2 19 2T24 7H28V12Z" fill={W} /><rect x="23" y="20" width="20" height="26" fill={W} />
                  </Svg>
                  <LabelLine>Paste</LabelLine>
                </Command>
              </Commands>
              <ClipColumn>
                <ClipButton>
                  <Svg w={24} vb="-1 0 24 24" stroke="#b8b6b4"><path d="M5 0L13 17M15 0L7 17" /><circle cx="5" cy="20" r="3" stroke="#9fcbe6" /><circle cx="15" cy="20" r="3" stroke="#9fcbe6" /></Svg>
                  Cut
                </ClipButton>
                <ClipButton>
                  <Svg w={24} stroke="#b8b6b4"><path d="M8 20H1V1H9L12 4M10 5H17L23 11V23H10ZM17 5V11H23M13 15H20M13 19H20" /></Svg>
                  Copy
                </ClipButton>
                <ClipButton>
                  <Svg w={24} stroke="#b8b6b4"><path d="M1 12L9 8L16 16L11 23Q5 19 1 12Z" fill="#fdf3dc" stroke="#f4c798" /><path d="M8 8L11 5L14 8L21 1L23 4L16 10L19 13L17 16Z" fill={W} /></Svg>
                  Format painter
                </ClipButton>
              </ClipColumn>
            </Clipboard>
            <GroupLabel>Clipboard</GroupLabel>
          </Group>
          {groups.map(([label, width, items]) => (
            <Group key={label} $width={width}>
              <Commands>
                {items.map(([icon, w, a, b, drop, off]) => (
                  <Command key={icon} $width={w} $off={off}>
                    {ribbonIcon[icon]}
                    <LabelLine>{a}</LabelLine>
                    {b !== undefined && <LabelLine>{b}{drop && <Chevron color={off ? "#a8a6a4" : K} />}</LabelLine>}
                  </Command>
                ))}
              </Commands>
              <GroupLabel>{label}</GroupLabel>
            </Group>
          ))}
          <Collapse aria-label="Collapse ribbon"><Chevron w={13} up sw={2.4} /></Collapse>
        </Groups>
      </Ribbon>

      <Workspace>
        <ViewRail>
          {viewIcons.map(([name, icon], i) => (
            <ViewButton key={name} $active={i === 0} aria-label={name}>
              {icon === "dax" ? (
                <DaxMark><Svg w={20} h={26} stroke={G}><path d="M1 18V4Q1 1 4 1H10L16 7V22H12M10 1V7H16M18 8V24Q18 25 14 25" /></Svg><b>DAX</b></DaxMark>
              ) : icon}
            </ViewButton>
          ))}
        </ViewRail>

        <Main>
          <Canvas>
            <Report>
              <ReportRail />
              <ReportBody>
                <Heading>Classic Models | <Accent>Sales Dashboard</Accent></Heading>
                <Visuals>
                  <Tree>
                    <TreeHeads>
                      <HeadCell title="Customer Country" sub="Australia" />
                      <HeadCell title="Product Line" sub="Classic Cars" />
                      <HeadCell title="Customer Name" />
                    </TreeHeads>
                    <TreeBody>
                      <TreeColumn><TreeNode name="Net Profit" value={3825880.25} max={3825880.25} row={4} picked /></TreeColumn>
                      <Links from={3} count={7} picked={3} />
                      <NodeColumn items={countries} picked={3} />
                      <Links from={3} count={7} picked={0} />
                      <NodeColumn items={products} picked={0} />
                      <Links from={0} count={5} picked={-1} />
                      <NodeColumn items={customers} picked={-1} />
                    </TreeBody>
                    <MoreNodes aria-label="Show more"><Chevron w={12} color="#c8c8c8" sw={1.2} /></MoreNodes>
                  </Tree>
                  <Card>
                    <CardMain>
                      <CardTitle>Sales Overview</CardTitle>
                      <SalesTable>
                        <colgroup>{[29, 54, 114, 93, 78].map((w) => <Col key={w} $width={w} />)}</colgroup>
                        <thead>
                          <tr>{["Year", "Month", "Sales Value", "Sales Value MoM%", "Sales Value YTD"].map((h) => <th key={h} scope="col">{h}</th>)}</tr>
                        </thead>
                        <tbody>
                          {sales.map(([y, m, v, p, t]) => (
                            <tr key={y + m}><td>{y}</td><td>{m}</td><td>${v}</td><td>{p === "-" ? "" : p}</td><td>${t}</td></tr>
                          ))}
                        </tbody>
                        <tfoot>
                          <tr><td>Total</td><td /><td>$9,604,190.610000001</td><td>4.82%</td><td>$1,770,936.71</td></tr>
                        </tfoot>
                      </SalesTable>
                    </CardMain>
                    <CardScroll />
                  </Card>
                </Visuals>
              </ReportBody>
            </Report>
          </Canvas>
          <PageBar>
            <LayoutButton $width={65} aria-label="Desktop layout">
              <Underlined><Svg w={30} h={22} stroke="#484644" strokeWidth="2"><path d="M2 1H28V16H2ZM15 16V21M10 21H20" /></Svg></Underlined>
            </LayoutButton>
            <LayoutButton $width={66} aria-label="Mobile layout">
              <Svg w={20} h={31} stroke="#484644" strokeWidth="2"><rect x="1" y="1" width="18" height="29" rx="1" /><path d="M8 26H12" /></Svg>
            </LayoutButton>
            <Arrows>
              <button aria-label="Previous page"><Svg w={7} h={12} stroke="none"><path d="M7 0V12L0 6Z" fill="#c8c6c4" /></Svg></button>
              <button aria-label="Next page"><Svg w={7} h={12} stroke="none"><path d="M0 0V12L7 6Z" fill="#c8c6c4" /></Svg></button>
            </Arrows>
            <PageTab>Sales Overview - Page 1</PageTab>
            <PageTab $active>Sales Overview - Page 2</PageTab>
            <AddPage aria-label="New page"><Svg w={17} stroke="#fff" strokeWidth="4"><path d="M8.500 0V17M0 8.500H17" /></Svg></AddPage>
          </PageBar>
        </Main>

        <SlimPane $white $width={49}>
          <button aria-label="Expand filters"><Double left /></button>
          <SlimIcon><Svg w={18} stroke="#323130"><path d="M17 1V17L8 11H1V7H8Z" /></Svg></SlimIcon>
          <SlimTitle>Filters</SlimTitle>
        </SlimPane>
        <SlimPane $width={52}>
          <button aria-label="Expand quick measure"><Double left /></button>
          <SlimGap />
          <SlimTitle>Quick measure</SlimTitle>
        </SlimPane>

        <Pane $width={271}>
          <PaneHead $right={12}>
            <PaneTitle>Visualizations</PaneTitle>
            <button aria-label="Collapse visualizations"><Double /></button>
          </PaneHead>
          <PaneSub>Build visual</PaneSub>
          <ModeRow>
            <ModeButton $active aria-label="Build visual">
              <Svg w={36} h={36}><path d="M0 1H29" /><rect x="1" y="9" width="34" height="10" fill={GREEN} stroke="#222" strokeDasharray="3 2" /><rect x="1" y="25" width="34" height="10" fill={GREEN} stroke="#222" strokeDasharray="3 2" /></Svg>
            </ModeButton>
            <ModeButton aria-label="Format page">
              <Svg w={36} h={36}><path d="M6 35H1V1H17L27 10V14M17 1V10H27M35 14L22 25L24 29Q32 23 35 14ZM22 25Q17 26 17 30Q14 34 9 34Q20 37 24 29" /></Svg>
            </ModeButton>
          </ModeRow>
          <svg width="100%" height="14" fill="none" stroke="#8a8886" aria-hidden="true">
            <path d="M0 13H25L36 1L48 13H300" strokeWidth="1.500" />
          </svg>
          <VisualGrid>
            {visuals.map(([name, kind]) => <VisualButton key={name} aria-label={name}><VisualIcon kind={kind} /></VisualButton>)}
          </VisualGrid>
          <MoreDots aria-label="Get more visuals"><Svg w={24} h={6} stroke="none"><path d="M1 2H4V5H1ZM10 2H13V5H10ZM19 2H22V5H19Z" fill={K} /></Svg></MoreDots>
          <Wells>
            <WellList>
              <WellLabel>Values</WellLabel>
              <DropZone>Add data fields here</DropZone>
              <WellHeading>Drill through</WellHeading>
              <SwitchRow>Cross-report<Switch><SwitchInput type="checkbox" role="switch" />Off</Switch></SwitchRow>
              <SwitchRow>Keep all filters<Switch $on><SwitchInput type="checkbox" role="switch" defaultChecked />On</Switch></SwitchRow>
            </WellList>
            <WellScroll />
          </Wells>
        </Pane>

        <Pane $width={269}>
          <PaneHead $right={10}>
            <PaneTitle>Data</PaneTitle>
            <button aria-label="Collapse data"><Double /></button>
          </PaneHead>
          <DataSearch>
            <Lens size={22} color="#616161" />
            <DataSearchInput type="search" placeholder="Search" aria-label="Search fields" />
          </DataSearch>
          <FieldArea>
            <FieldList>
              {fields.map(([name, icon, open]) => (
                <FieldRow key={name}>
                  <Slot $width={20}>{open && <button aria-label={`Expand ${name}`}><Chevron w={18} right color="#605e5c" sw={1.4} /></button>}</Slot>
                  <FieldLabel><Check type="checkbox" /><FieldIcon>{icon && fieldIcon[icon]}</FieldIcon>{name}</FieldLabel>
                </FieldRow>
              ))}
              <FieldRow $table>
                <Slot $width={8}><button aria-label="Expand Table"><Chevron w={18} right color="#605e5c" sw={1.4} /></button></Slot>
                <FieldIcon>{fieldIcon.table}</FieldIcon>Table
              </FieldRow>
            </FieldList>
            <FieldScroll />
          </FieldArea>
        </Pane>
      </Workspace>

      <StatusBar>
        Page 2 of 2
        <Spacer />
        <ZoomStep aria-label="Zoom out">-</ZoomStep>
        <ZoomRange type="range" min="0" max="100" defaultValue="21" aria-label="Zoom" />
        <ZoomStep aria-label="Zoom in">+</ZoomStep>
        <ZoomValue>50%</ZoomValue>
        <button aria-label="Fit to page"><Svg w={24} h={18} stroke="#605e5c"><rect x="1" y="1" width="22" height="16" /><path d="M4 7V4H8M16 4H20V7M20 11V14H16M8 14H4V11" /></Svg></button>
      </StatusBar>

      <Taskbar>
        <Weather>
          <svg width="37" height="32" viewBox="0 0 37 32" aria-hidden="true">
            <defs><linearGradient id="cld" x1="0" y1="0" x2="0" y2="1"><stop offset="0" stopColor="#7fa8e8" /><stop offset="1" stopColor="#cfdcf8" /></linearGradient></defs>
            <circle cx="26" cy="9" r="9" fill="#f58a1e" /><path d="M9 31Q1 30 1 23Q1 17 8 16Q10 7 18 8Q25 9 26 15Q36 15 36 23Q36 30 28 31Z" fill="url(#cld)" />
          </svg>
          <span>74°F<Muted>Mostly cloudy</Muted></span>
        </Weather>
        <Apps>
          <AppButton aria-label="Start">{appIcons.windows}</AppButton>
          <TaskSearch>
            <Lens size={24} color="#222" sw={2.4} />
            <TaskSearchInput type="search" placeholder="Search" aria-label="Search Windows" />
            <svg width="60" height="38" viewBox="0 0 60 38" aria-hidden="true">
              <path d="M20 22L34 34M22 20L40 30M20 24L30 37" stroke="#4f9e34" strokeWidth="3" />
              <Flower x={8} y={12} r={9} c="#f3b21c" m="#d98e0c" /><Flower x={28} y={8} r={9} c="#f46a4e" m="#d9452c" /><Flower x={8} y={27} r={8} c="#f2604a" m="#d04030" />
              <Flower x={30} y={17} r={11} c="#f9cf3a" m="#e8a818" /><Flower x={19} y={10} r={10} c="#fff" m="#f0b020" /><circle cx="17" cy="26" r="8" fill="#a98be0" /><Flower x={17} y={26} r={9} c="#b79cea" m="#7d5cc0" />
              <path d="M51 29L43 21Q40 15 45 13Q50 12 51 17Q54 13 58 17Q60 21 51 29Z" fill="#ee5b45" />
            </svg>
          </TaskSearch>
          <AppButton aria-label="Task view">{appIcons.tasks}</AppButton>
          <AppButton aria-label="Copilot app">{appIcons.copilot}</AppButton>
          <AppButton aria-label="Teams">{appIcons.teams}</AppButton>
          <AppButton aria-label="Edge">{appIcons.edge}</AppButton>
          <AppButton $running aria-label="File Explorer">{appIcons.files}</AppButton>
          <AppButton $running aria-label="Chrome">{appIcons.chrome}</AppButton>
          <AppButton $active aria-label="Power BI">{appIcons.power}</AppButton>
        </Apps>
        <Tray>
          <button aria-label="Hidden icons"><Chevron w={18} up color="#222" sw={1.8} /></button>
          <Slot $width={2} />
          <Svg w={24} h={18} stroke="#222"><path d="M1 6Q12 -4 23 6M4 10Q12 2 20 10M7.500 13Q12 8.500 16.500 13" /><circle cx="12" cy="16" r="1.300" fill="#222" /></Svg>
          <Svg w={24} h={20} stroke="#222"><path d="M1 7H5L10 2V18L5 13H1ZM13 7Q15 10 13 13M16 4Q20 10 16 16" /><path d="M19 2Q25 10 19 18" stroke="#b0b4ba" /></Svg>
          <Svg w={24} h={20} stroke="#222"><path d="M9 4H19Q21 4 21 6V15Q21 17 19 17H4Q2 17 2 15V11M22 8V13" strokeWidth="2" /><path d="M10 6.500H18.500V14.500H5L6 12Z" fill="#222" stroke="none" /><path d="M5 0L1 7H4L2 12L8 5H5Z" fill="#222" stroke="none" /></Svg>
          <Clock>11:39 AM<br />9/8/2024</Clock>
          <Svg w={20} h={24} stroke="none"><path d="M10 0Q18 1 18 9V15L20 18V19H0V18L2 15V9Q2 1 10 0ZM6 21H14Q13 24 10 24T6 21Z" fill="#0b3d91" /></Svg>
        </Tray>
      </Taskbar>
    </Shell>
  );
}
